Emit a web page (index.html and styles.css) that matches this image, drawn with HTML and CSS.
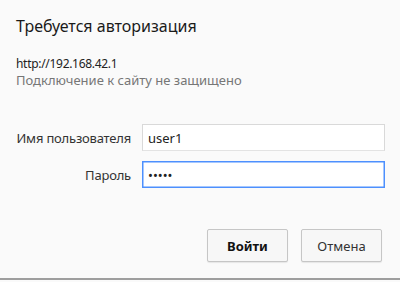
FILE: index.html
```html
<!DOCTYPE html>
<html>
  <head>
    <meta charset="UTF-8" />
    <meta name="viewport" content="width=device-width, initial-scale=1.0" />
    <title>Требуется авторизация</title>
    <link rel="stylesheet" href="styles.css">
  </head>
  <body>
    <div class="dialog">
      <h1 class="title">Требуется авторизация</h1>
      <div class="origin">http://192.168.42.1</div>
      <div class="warning">Подключение к сайту не защищено</div>

      <form class="login-form" onsubmit="return false">
        <label class="form-label" for="username">Имя пользователя</label>
        <input id="username" class="form-input" type="text" value="user1" />
        <label class="form-label" for="password">Пароль</label>
        <input id="password" class="form-input focused" type="password" value="12345" />
      </form>

      <div class="buttons">
        <button class="btn btn-primary">Войти</button>
        <button class="btn">Отмена</button>
      </div>
    </div>
  </body>
</html>
```

FILE: styles.css
```css
body {
  margin: 0;
  background-color: #fafafa;
  font-family: "Noto Sans", "Open Sans", sans-serif;
  color: #222;
}

.dialog {
  height: 280px;
  border-bottom: 2px solid #9e9e9e;
  box-sizing: border-box;
  padding: 15px 0 0 0;
}

.title {
  font-size: 16px;
  font-weight: normal;
  line-height: 22px;
  margin: 0 0 18px 16px;
  color: #1a1a1a;
}

.origin {
  font-size: 12px;
  letter-spacing: -0.3px;
  line-height: 17px;
  margin-left: 16px;
  color: #222;
}

.warning {
  font-size: 13px;
  line-height: 17px;
  margin-left: 16px;
  color: #767676;
}

.login-form {
  display: grid;
  grid-template-columns: 116px 1fr;
  column-gap: 11px;
  row-gap: 10px;
  align-items: center;
  margin: 35px 15px 0 15px;
}

.form-label {
  font-size: 13px;
  letter-spacing: -0.2px;
  white-space: nowrap;
  justify-self: end;
  color: #333;
}

.form-input {
  height: 27px;
  box-sizing: border-box;
  border: 1px solid #d9d9d9;
  border-bottom-color: #e3e3e3;
  background: #fff;
  padding: 0 5px;
  font-family: inherit;
  font-size: 13px;
  color: #222;
  outline: none;
}

.focused {
  border: 1px solid #4d90fe;
  box-shadow: inset 0 0 0 0.5px #4d90fe;
}

.buttons {
  display: flex;
  justify-content: flex-end;
  gap: 13px;
  margin: 41px 18px 0 0;
}

.btn {
  width: 81px;
  height: 33px;
  font-family: inherit;
  font-size: 13px;
  color: #333;
  background: #f7f7f7;
  border: 1px solid #c6c6c6;
  border-radius: 2px;
  box-shadow: 0 1px 1px rgba(0, 0, 0, 0.08);
}

.btn-primary {
  font-weight: bold;
  color: #111;
}
```
